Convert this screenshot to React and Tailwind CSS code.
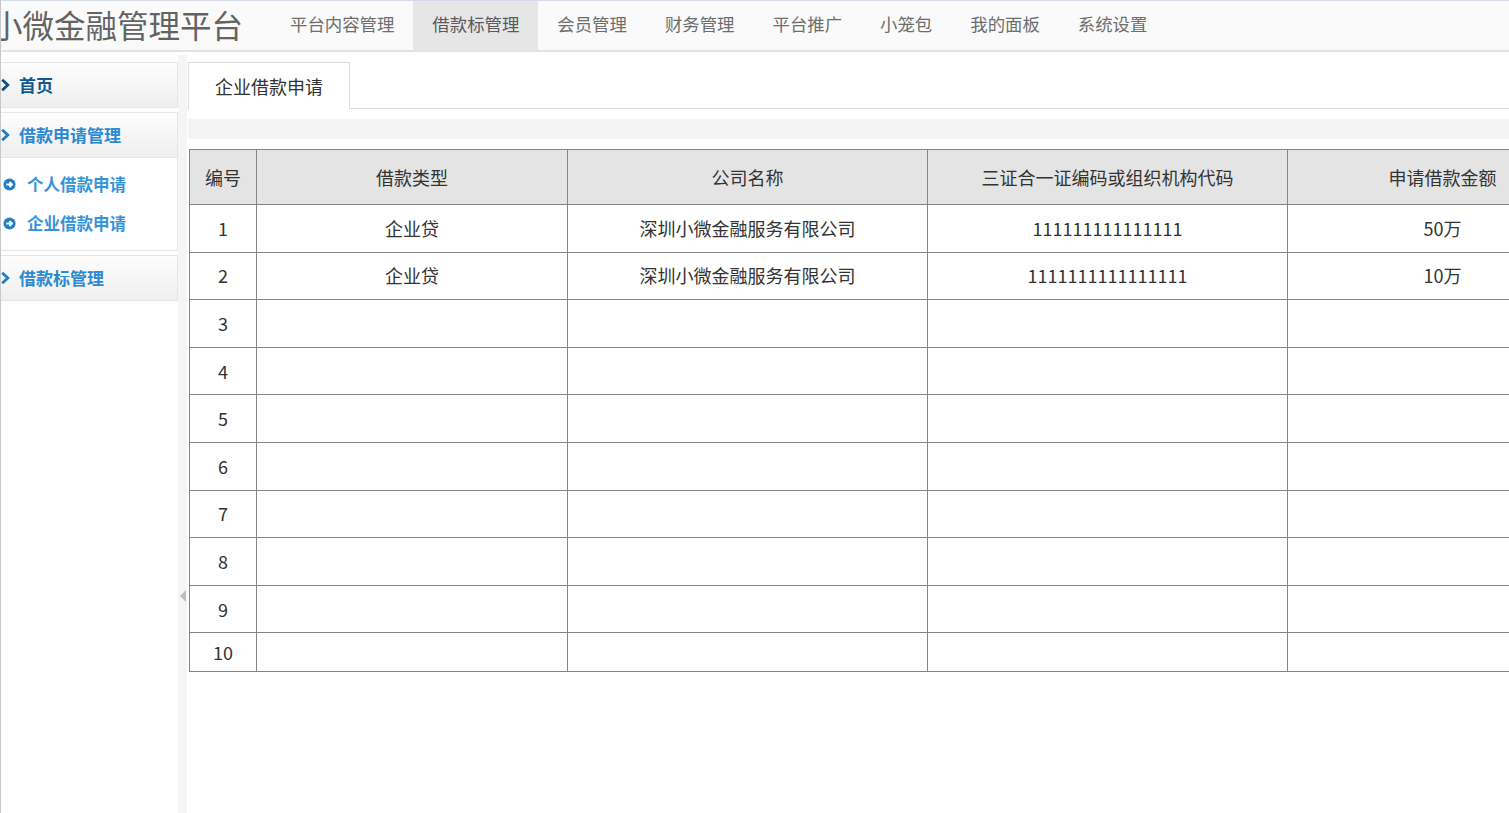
import React from "react";

const F = { fontFamily: '"Noto Sans CJK SC", "Microsoft YaHei", sans-serif' };

const navItems = ["平台内容管理", "借款标管理", "会员管理", "财务管理", "平台推广", "小笼包", "我的面板", "系统设置"];

function Chevron({ color }) {
  return (
    <svg width="9" height="14" viewBox="0 0 9 14" className="shrink-0">
      <path d="M1.2 1.8 L6.8 7 L1.2 12.2" fill="none" stroke={color} strokeWidth="2.8" strokeLinejoin="miter" />
    </svg>
  );
}

function CircleArrow() {
  return (
    <svg width="13" height="13" viewBox="0 0 14 14" className="shrink-0">
      <circle cx="7" cy="7" r="6.5" fill="#1f7fc4" />
      <path d="M3.5 7 H9.5 M7 4.3 L9.8 7 L7 9.7" fill="none" stroke="#fff" strokeWidth="1.9" />
    </svg>
  );
}

const rows = [
  ["1", "企业贷", "深圳小微金融服务有限公司", "111111111111111", "50万"],
  ["2", "企业贷", "深圳小微金融服务有限公司", "1111111111111111", "10万"],
  ["3", "", "", "", ""],
  ["4", "", "", "", ""],
  ["5", "", "", "", ""],
  ["6", "", "", "", ""],
  ["7", "", "", "", ""],
  ["8", "", "", "", ""],
  ["9", "", "", "", ""],
  ["10", "", "", "", ""],
];

export default function App() {
  return (
    <div className="w-[1509px] h-[813px] overflow-hidden bg-white border-l border-[#c8c8c8] flex flex-col" style={F}>
      {/* Header */}
      <div className="h-[52px] shrink-0 flex items-stretch bg-[#fafafa] border-t border-[#d3dbe6] border-b-2 border-b-[#e3e3e3] overflow-hidden">
        <div className="ml-[-10px] w-[280px] shrink-0 flex items-center text-[31.5px] leading-none text-[#636363] pb-[2px] whitespace-nowrap">
          小微金融管理平台
        </div>
        <div className="flex items-stretch">
          {navItems.map((n, i) => (
            <div
              key={n}
              className={`px-[19px] flex items-center text-[17.4px] pb-[2px] whitespace-nowrap ${i === 1 ? "bg-[#e6e6e6] text-[#5a5a5a]" : "text-[#6e6e6e]"}`}
            >
              {n}
            </div>
          ))}
        </div>
      </div>

      <div className="flex flex-1 min-h-0">
        {/* Sidebar */}
        <div className="w-[177px] shrink-0 pt-[10px] flex flex-col gap-[4px]">
          <div className="h-[46px] flex items-center gap-[9px] border border-[#e6e6e6] border-l-0 bg-gradient-to-b from-[#fdfdfd] to-[#efefef]">
            <Chevron color="#124f80" />
            <span className="text-[17px] font-semibold text-[#11598f]">首页</span>
          </div>
          <div className="flex flex-col">
            <div className="h-[46px] flex items-center gap-[9px] border border-[#e6e6e6] border-l-0 bg-gradient-to-b from-[#fdfdfd] to-[#efefef]">
              <Chevron color="#1f7fc4" />
              <span className="text-[17px] font-semibold text-[#2b8ad2]">借款申请管理</span>
            </div>
            <div className="h-[93px] border border-t-0 border-[#e6e6e6] border-l-0 bg-white flex flex-col pt-[17px] gap-[21px] pl-[2px]">
              <div className="flex items-center gap-[11px] h-[18px]">
                <CircleArrow />
                <span className="text-[16.5px] font-semibold text-[#3593d8]">个人借款申请</span>
              </div>
              <div className="flex items-center gap-[11px] h-[18px]">
                <CircleArrow />
                <span className="text-[16.5px] font-semibold text-[#3593d8]">企业借款申请</span>
              </div>
            </div>
          </div>
          <div className="h-[46px] flex items-center gap-[9px] border border-[#e6e6e6] border-l-0 bg-gradient-to-b from-[#fdfdfd] to-[#efefef]">
            <Chevron color="#1f7fc4" />
            <span className="text-[17px] font-semibold text-[#2b8ad2]">借款标管理</span>
          </div>
        </div>

        {/* Splitter */}
        <div className="w-[9px] shrink-0 mt-[3px] bg-[#f5f5f5] flex flex-col items-center pt-[535px]">
          <svg width="6" height="12" viewBox="0 0 6 12">
            <path d="M6 0 L0 6 L6 12 Z" fill="#bdbdbd" />
          </svg>
        </div>

        {/* Main */}
        <div className="flex-1 min-w-0 pt-[10px] pl-[1px] overflow-hidden">
          <div className="flex items-end h-[47px]">
            <div className="w-[162px] h-[47px] border border-[#dcdcdc] border-b-0 bg-white flex items-center justify-center text-[18px] text-[#333]">
              企业借款申请
            </div>
            <div className="flex-1 border-b border-[#dcdcdc]" />
          </div>
          <div className="h-[20px] mt-[10px] bg-[#f4f4f4]" />
          <div className="mt-[10px] pl-[1px]">
            <table className="border-collapse text-[18px] text-[#333] w-[1408px] table-fixed">
              <colgroup>
                <col className="w-[67px]" />
                <col className="w-[311px]" />
                <col className="w-[360px]" />
                <col className="w-[360px]" />
                <col className="w-[310px]" />
              </colgroup>
              <thead>
                <tr className="h-[55px] bg-[#e4e4e4]">
                  {["编号", "借款类型", "公司名称", "三证合一证编码或组织机构代码", "申请借款金额"].map((h) => (
                    <th key={h} className="border border-[#858585] font-normal text-center">
                      {h}
                    </th>
                  ))}
                </tr>
              </thead>
              <tbody>
                {rows.map((r, i) => (
                  <tr key={i} className={i === 9 ? "h-[39px]" : "h-[47.6px]"}>
                    {r.map((c, j) => (
                      <td key={j} className="border border-[#858585] text-center p-0">
                        {c}
                      </td>
                    ))}
                  </tr>
                ))}
              </tbody>
            </table>
          </div>
        </div>
      </div>
    </div>
  );
}
